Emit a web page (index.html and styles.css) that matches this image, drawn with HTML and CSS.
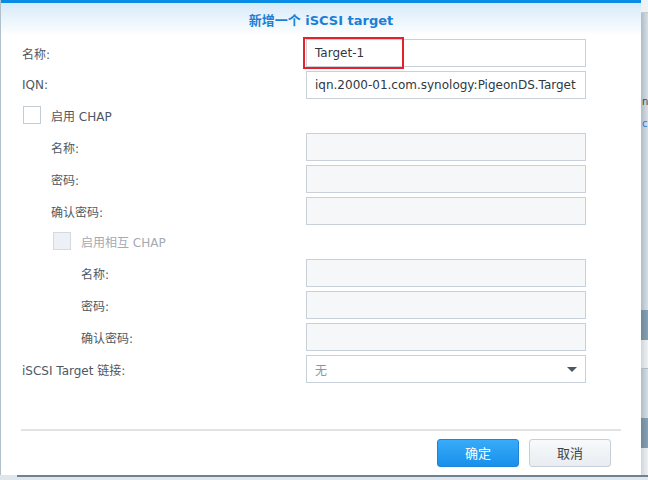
FILE: index.html
```html
<!DOCTYPE html>
<html lang="zh-CN">
<head>
<meta charset="utf-8">
<title>新增一个 iSCSI target</title>
<link rel="stylesheet" href="styles.css">
</head>
<body>
<div class="desktop">
  <div class="stage">
    <div class="dialog">
      <div class="header">新增一个 iSCSI target</div>
      <div class="form">
        <div class="row">
          <div class="label l1">名称:</div>
          <div class="field">Target-1<span class="highlight"></span></div>
        </div>
        <div class="row">
          <div class="label l1">IQN:</div>
          <div class="field">iqn.2000-01.com.synology:PigeonDS.Target</div>
        </div>
        <div class="row check-row">
          <div class="label l1 check-label"><span class="checkbox"></span>启用 CHAP</div>
        </div>
        <div class="row">
          <div class="label l2">名称:</div>
          <div class="field disabled"></div>
        </div>
        <div class="row">
          <div class="label l2">密码:</div>
          <div class="field disabled"></div>
        </div>
        <div class="row">
          <div class="label l2">确认密码:</div>
          <div class="field disabled"></div>
        </div>
        <div class="row check-row">
          <div class="label l2 check-label muted"><span class="checkbox off"></span>启用相互 CHAP</div>
        </div>
        <div class="row">
          <div class="label l3">名称:</div>
          <div class="field disabled"></div>
        </div>
        <div class="row">
          <div class="label l3">密码:</div>
          <div class="field disabled"></div>
        </div>
        <div class="row">
          <div class="label l3">确认密码:</div>
          <div class="field disabled"></div>
        </div>
        <div class="row">
          <div class="label l1">iSCSI Target 链接:</div>
          <div class="field select"><span class="placeholder">无</span><span class="arrow"></span></div>
        </div>
      </div>
      <div class="footer">
        <div class="separator"></div>
        <div class="buttons">
          <button class="btn primary">确定</button>
          <button class="btn">取消</button>
        </div>
      </div>
    </div>
    <div class="backdrop">
      <div class="bd-top"></div>
      <div class="bd-mid">
        <div class="bd-text dark">n</div>
        <div class="bd-text blue">c</div>
      </div>
      <div class="bd-band"></div>
      <div class="bd-light"></div>
      <div class="bd-gap"></div>
      <div class="bd-band"></div>
      <div class="bd-end"></div>
    </div>
  </div>
  <div class="bottom">
    <div class="bottom-line"></div>
  </div>
</div>
</body>
</html>
```
FILE: styles.css
```css
html, body {
  margin: 0;
  padding: 0;
}
body {
  background: #dfe6ec;
  font-family: "DejaVu Sans", "Noto Sans CJK SC", sans-serif;
  font-size: 12px;
}
.desktop {
  width: 648px;
  height: 480px;
  overflow: hidden;
  display: flex;
  flex-direction: column;
}
.stage {
  display: flex;
  height: 475px;
}
.dialog {
  width: 640px;
  flex: none;
  border-left: 1px solid #b1c0cb;
  background: #fff;
  display: flex;
  flex-direction: column;
}
.header {
  height: 33px;
  border-top: 3px solid #0a8be6;
  background: linear-gradient(#d6eaf9, #ffffff);
  display: flex;
  align-items: center;
  justify-content: center;
  font-weight: bold;
  font-size: 13px;
  color: #1a7fd6;
}
.form {
  display: flex;
  flex-direction: column;
  gap: 4px;
  padding-top: 3px;
}
.row {
  display: flex;
  align-items: center;
  height: 28px;
}
.check-row {
  margin-top: -2px;
}
.label {
  width: 305px;
  flex: none;
  box-sizing: border-box;
  color: #4e5863;
  display: flex;
  align-items: center;
}
.l1 { padding-left: 21px; }
.l2 { padding-left: 50px; }
.l3 { padding-left: 80px; }
.check-label.l1 { padding-left: 22px; }
.check-label.l2 { padding-left: 52px; }
.checkbox {
  width: 18px;
  height: 18px;
  box-sizing: border-box;
  border: 1px solid #c4cdd6;
  background: #fff;
  margin-right: 10px;
  flex: none;
}
.checkbox.off {
  background: #edf1f5;
  border-color: #d2dae2;
}
.muted {
  color: #a3aab2;
}
.field {
  width: 280px;
  height: 28px;
  flex: none;
  box-sizing: border-box;
  border: 1px solid #c8d1da;
  padding: 0 8px;
  display: flex;
  align-items: center;
  color: #2f3740;
  position: relative;
  white-space: nowrap;
  overflow: visible;
}
.field.disabled {
  background: #f5f7f9;
}
.highlight {
  position: absolute;
  left: -4px;
  top: -3px;
  width: 101px;
  height: 32px;
  box-sizing: border-box;
  border: 2px solid #e3222b;
}
.placeholder {
  color: #8e969e;
}
.arrow {
  margin-left: auto;
  width: 0;
  height: 0;
  border-left: 5px solid transparent;
  border-right: 5px solid transparent;
  border-top: 5px solid #4f5860;
}
.footer {
  margin-top: 46px;
}
.separator {
  height: 2px;
  margin: 0 20px 0 20px;
  background: linear-gradient(#e6e6e6, #dedede);
}
.buttons {
  display: flex;
  justify-content: flex-end;
  gap: 10px;
  padding: 8px 30px 0 0;
}
.btn {
  width: 82px;
  height: 28px;
  box-sizing: border-box;
  border-radius: 3px;
  border: 1px solid #c6ced6;
  background: linear-gradient(#f8fafb, #e8edf1);
  color: #3c444c;
  font-family: "Noto Sans CJK SC", sans-serif;
  font-size: 13px;
  padding: 0;
  line-height: 26px;
}
.btn.primary {
  border-color: #1d84d6;
  background: linear-gradient(#38abf9, #1890ea);
  color: #fff;
}
.backdrop {
  flex: 1;
  display: flex;
  flex-direction: column;
  overflow: hidden;
  background: linear-gradient(to right, #aebcc7, #d7dfe5);
}
.bd-top {
  height: 12px;
  background: #eef2f4;
  border-bottom: 1px solid #c3cdd5;
}
.bd-mid {
  height: 297px;
  padding-top: 78px;
  box-sizing: border-box;
  font-family: "DejaVu Sans", sans-serif;
  font-size: 10px;
  line-height: 22px;
}
.bd-text {
  padding-left: 1px;
}
.bd-text.dark { color: #3c444c; }
.bd-text.blue { color: #1a7fd6; }
.bd-band {
  height: 30px;
  background: linear-gradient(to right, #6f889c, #86a0b4);
}
.bd-light {
  height: 28px;
  background: linear-gradient(to right, #cfd6dc, #eef1f3);
  border-bottom: 1px solid #aebbc5;
}
.bd-gap {
  height: 49px;
}
.bd-end {
  flex: 1;
  background: linear-gradient(to right, #cfd6dc, #eef1f3);
}
.bottom {
  height: 5px;
  padding-left: 17px;
  background: #dfe6ec;
}
.bottom-line {
  height: 2px;
  background: #6e8292;
}
```
